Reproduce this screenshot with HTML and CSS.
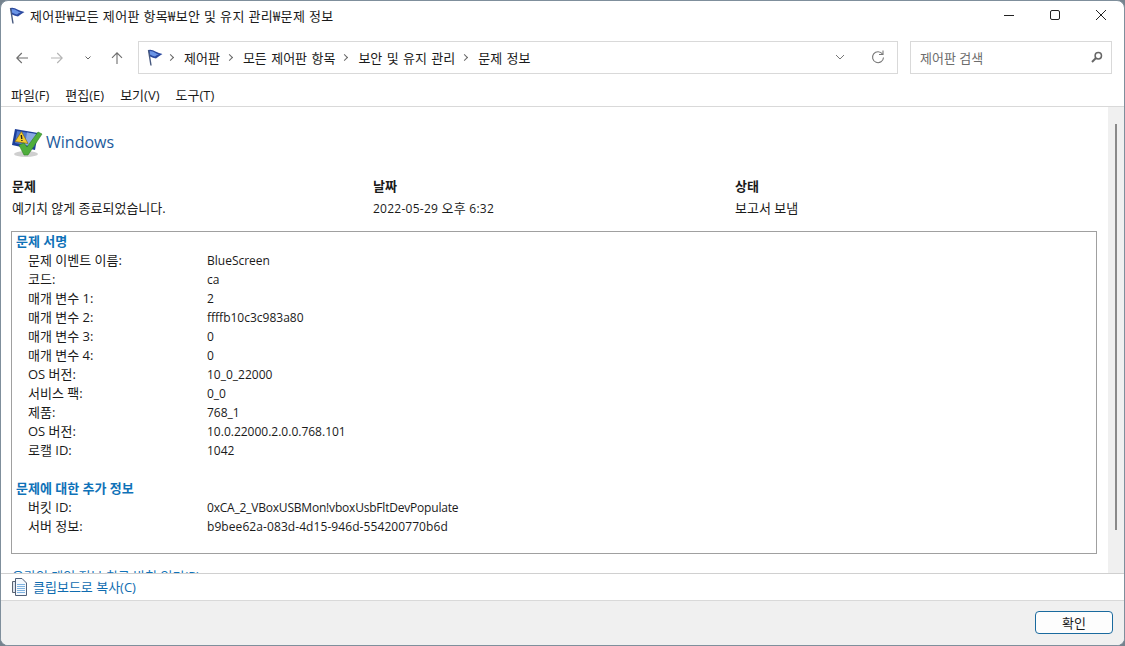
FILE: index.html
```html
<!DOCTYPE html>
<html>
<head>
  <meta charset="utf-8">
  <title>문제 정보</title>
  <link rel="stylesheet" href="styles.css">
</head>
<body>
  <div class="window">
    <!-- 제목 표시줄 -->
    <div class="titlebar">
      <svg class="flag" width="16" height="17" viewBox="0 0 16 17"><path d="M1 1 Q5 0 8.500 2.500 Q12 4 15.500 5 Q12 7 9 9.500 Q6 9 3 7.500 Z" fill="#2c4aa0"/><path d="M2.500 2 Q6 2 8.500 4 Q10 5 12 5.500 Q9 6 8 7.500 Q5.500 7 3 5.500 Z" fill="#6a94e6"/><path d="M1.500 1 L4 16.500" stroke="#46587e" stroke-width="1.400"/></svg>
      <span class="title-text">제어판₩모든 제어판 항목₩보안 및 유지 관리₩문제 정보</span>
      <div class="win-buttons">
        <svg width="12" height="12" viewBox="0 0 12 12"><path d="M1 6.500 H11" stroke="#222" stroke-width="1"/></svg>
        <svg width="12" height="12" viewBox="0 0 12 12"><rect x="1.500" y="1.500" width="9" height="9" rx="1.500" fill="none" stroke="#222"/></svg>
        <svg width="12" height="12" viewBox="0 0 12 12"><path d="M1 1 L11 11 M11 1 L1 11" stroke="#222" stroke-width="1"/></svg>
      </div>
    </div>

    <!-- 주소 표시줄 -->
    <div class="navbar">
      <div class="nav-buttons">
        <svg class="nav-back" width="12" height="12" viewBox="0 0 12 12"><path d="M12 6 H0.800 M5.800 1 L0.800 6 L5.800 11" fill="none" stroke="#6d6d6d" stroke-width="1.100"/></svg>
        <svg class="nav-fwd" width="12" height="12" viewBox="0 0 12 12"><path d="M0 6 H11.200 M6.200 1 L11.200 6 L6.200 11" fill="none" stroke="#b4b4b4" stroke-width="1.100"/></svg>
        <svg class="nav-down" width="6" height="4" viewBox="0 0 6 4"><path d="M0.500 0.500 L3 3 L5.500 0.500" fill="none" stroke="#666" stroke-width="1"/></svg>
        <svg class="nav-up" width="12" height="12" viewBox="0 0 12 12"><path d="M6 12 V0.800 M1 5.800 L6 0.800 L11 5.800" fill="none" stroke="#6d6d6d" stroke-width="1.100"/></svg>
      </div>
      <div class="address">
        <svg class="flag" width="16" height="17" viewBox="0 0 16 17"><path d="M1 1 Q5 0 8.500 2.500 Q12 4 15.500 5 Q12 7 9 9.500 Q6 9 3 7.500 Z" fill="#2c4aa0"/><path d="M2.500 2 Q6 2 8.500 4 Q10 5 12 5.500 Q9 6 8 7.500 Q5.500 7 3 5.500 Z" fill="#6a94e6"/><path d="M1.500 1 L4 16.500" stroke="#46587e" stroke-width="1.400"/></svg>
        <span class="crumb-sep"></span>
        <span>제어판</span><span class="crumb-sep"></span>
        <span>모든 제어판 항목</span><span class="crumb-sep"></span>
        <span>보안 및 유지 관리</span><span class="crumb-sep"></span>
        <span>문제 정보</span>
        <svg class="addr-down" width="10" height="6" viewBox="0 0 10 6"><path d="M1 1 L5 5 L9 1" fill="none" stroke="#777" stroke-width="1"/></svg>
        <svg class="addr-refresh" width="14" height="14" viewBox="0 0 14 14"><path d="M11.500 4 A5.500 5.500 0 1 0 12.500 7.500" fill="none" stroke="#777" stroke-width="1.100"/><path d="M12 0.500 V4.500 H8" fill="none" stroke="#777" stroke-width="1.100"/></svg>
      </div>
      <div class="search">
        <span>제어판 검색</span>
        <svg width="12" height="12" viewBox="0 0 12 12"><circle cx="7.300" cy="4.700" r="3.200" fill="none" stroke="#666" stroke-width="1.500"/><path d="M5 7 L1 11" stroke="#666" stroke-width="2"/></svg>
      </div>
    </div>

    <!-- 메뉴 -->
    <div class="menubar">
      <span>파일(F)</span>
      <span>편집(E)</span>
      <span>보기(V)</span>
      <span>도구(T)</span>
    </div>

    <div class="main">
      <div class="content">
        <div class="brand">
          <svg width="32" height="32" viewBox="0 0 32 32">
            <path d="M4 3 L27 7 L24 24 L1 19 Z" fill="#1d3f9a"/>
            <path d="M6 5 L25 8 L23 21 L4 17 Z" fill="#4f78cc"/>
            <path d="M16 6.500 L25 8 L23 21 L14 19 Z" fill="#8aa8e2"/>
            <path d="M10.500 5.500 L17 17.500 L4 15.500 Z" fill="#f3cb2d" stroke="#7a5a10" stroke-width="0.600"/>
            <path d="M10.300 9 L10.800 13 M10.900 14 V15" stroke="#222" stroke-width="1.400"/>
            <ellipse cx="15" cy="28" rx="12" ry="3" fill="#cfcfcf"/>
            <path d="M8 19 L13 17 L16 21 L27 6 L31 8 L17 29 L13 29 Z" fill="#4fae3c" stroke="#2d7f25" stroke-width="0.600"/>
          </svg>
          <span>Windows</span>
        </div>

        <div class="summary">
          <div class="summary-col">
            <b>문제</b>
            <span>예기치 않게 종료되었습니다.</span>
          </div>
          <div class="summary-col">
            <b>날짜</b>
            <span class="date">2022-05-29 <span class="ko">오후</span> 6:32</span>
          </div>
          <div class="summary-col">
            <b>상태</b>
            <span>보고서 보냄</span>
          </div>
        </div>

        <div class="detail-box">
          <div class="section-head">문제 서명</div>
          <div class="detail-row"><span>문제 이벤트 이름:</span><span>BlueScreen</span></div>
          <div class="detail-row"><span>코드:</span><span>ca</span></div>
          <div class="detail-row"><span>매개 변수 1:</span><span>2</span></div>
          <div class="detail-row"><span>매개 변수 2:</span><span>ffffb10c3c983a80</span></div>
          <div class="detail-row"><span>매개 변수 3:</span><span>0</span></div>
          <div class="detail-row"><span>매개 변수 4:</span><span>0</span></div>
          <div class="detail-row"><span>OS 버전:</span><span>10_0_22000</span></div>
          <div class="detail-row"><span>서비스 팩:</span><span>0_0</span></div>
          <div class="detail-row"><span>제품:</span><span>768_1</span></div>
          <div class="detail-row"><span>OS 버전:</span><span>10.0.22000.2.0.0.768.101</span></div>
          <div class="detail-row"><span>로캘 ID:</span><span>1042</span></div>
          <div class="section-head second">문제에 대한 추가 정보</div>
          <div class="detail-row"><span>버킷 ID:</span><span class="bucket">0xCA_2_VBoxUSBMon!vboxUsbFltDevPopulate</span></div>
          <div class="detail-row"><span>서버 정보:</span><span class="guid">b9bee62a-083d-4d15-946d-554200770b6d</span></div>
        </div>

        <div class="privacy-link">온라인 개인 정보 취급 방침 읽기(P)</div>
      </div>
      <div class="scrollbar"><div class="scroll-thumb"></div></div>
    </div>

    <div class="copybar">
      <svg width="15" height="18" viewBox="0 0 15 18">
        <path d="M0.500 3.500 H6 V14.500 H0.500 Z" fill="#dfe5ee" stroke="#5a6472"/>
        <path d="M3.500 0.500 H10 L14.500 5 V17.500 H3.500 Z" fill="#f4f8fd" stroke="#4f5f78"/>
        <path d="M5 6.500 H13 M5 8.500 H13 M5 10.500 H13 M5 12.500 H13 M5 14.500 H13" stroke="#7fb2e0"/>
      </svg>
      <span>클립보드로 복사(C)</span>
    </div>

    <div class="footer">
      <button class="ok-button">확인</button>
    </div>
  </div>
</body>
</html>
```

FILE: styles.css
```css
* {
  box-sizing: border-box;
}

html, body {
  height: 100%;
}

body {
  margin: 0;
  background-color: #75838e;
  font-family: "Open Sans", "Noto Sans CJK KR", sans-serif;
  font-size: 13px;
  color: #1a1a1a;
  overflow: hidden;
}

.window {
  display: flex;
  flex-direction: column;
  height: 646px;
  background-color: #fff;
  border: 1px solid #7f8f9c;
  border-radius: 8px;
  overflow: hidden;
}

/* 제목 표시줄 */
.titlebar {
  display: flex;
  align-items: center;
  height: 31px;
  padding-left: 8px;
  padding-bottom: 3px;
  flex: none;
}

.title-text {
  margin-left: 5px;
  letter-spacing: 0.35px;
}

.win-buttons {
  display: flex;
  align-items: center;
  gap: 34px;
  margin-left: auto;
  margin-right: 17px;
}

/* 주소 표시줄 */
.navbar {
  display: flex;
  height: 33px;
  margin-top: 9px;
  flex: none;
}

.nav-buttons {
  display: flex;
  align-items: center;
  width: 137px;
  padding-left: 15px;
}

.nav-fwd {
  margin-left: 23px;
}

.nav-down {
  margin-left: 22px;
}

.nav-up {
  margin-left: 20px;
}

.address {
  display: flex;
  align-items: center;
  width: 760px;
  padding-left: 8px;
  padding-right: 12px;
  padding-bottom: 1px;
  border: 1px solid #d9d9d9;
  word-spacing: 1px;
}

.crumb-sep {
  width: 5px;
  height: 5px;
  margin: 0 11px 0 7px;
  border-top: 1px solid #666;
  border-right: 1px solid #666;
  transform: rotate(45deg);
}

.address .flag {
  margin-right: -2px;
}

.addr-down {
  margin-left: auto;
}

.addr-refresh {
  margin-left: 26px;
}

.search {
  display: flex;
  align-items: center;
  justify-content: space-between;
  width: 202px;
  margin-left: 12px;
  padding: 0 8px 1px 9px;
  border: 1px solid #d9d9d9;
  color: #6d6d6d;
}

/* 메뉴 */
.menubar {
  display: flex;
  align-items: center;
  gap: 16px;
  height: 24px;
  margin-top: 9px;
  padding-left: 10px;
  border-bottom: 1px solid #d9d9d9;
  flex: none;
}

.main {
  display: flex;
  height: 466px;
  flex: none;
}

.content {
  flex: 1;
  padding: 17px 11px 0 10px;
  overflow: hidden;
}

.brand {
  display: flex;
  align-items: center;
  gap: 3px;
  height: 36px;
  font-size: 16px;
  color: #1c5a9c;
}

.summary {
  display: flex;
  margin-top: 17px;
}

.summary-col {
  display: flex;
  flex-direction: column;
  gap: 4px;
  width: 362px;
  line-height: 18px;
}

.summary-col:first-child {
  padding-left: 1px;
}

.summary-col b {
  font-weight: 700;
}

.date {
  font-size: 12px;
  letter-spacing: 0.25px;
}

.ko {
  font-size: 13px;
}

.detail-box {
  height: 323px;
  margin-top: 13px;
  padding: 0 4px;
  border: 1px solid #a0a0a0;
}

.section-head {
  height: 19px;
  line-height: 19px;
  font-weight: 700;
  color: #0f72b8;
}

.section-head.second {
  margin-top: 19px;
}

.detail-row {
  display: grid;
  grid-template-columns: 179px 1fr;
  height: 19px;
  padding-left: 12px;
  line-height: 19px;
}

.detail-row span:last-child {
  font-size: 12px;
}

.bucket {
  letter-spacing: -0.2px;
}

.guid {
  letter-spacing: 0.08px;
}

.privacy-link {
  margin-top: 13px;
  padding-left: 1px;
  line-height: 18px;
  color: #0f72b8;
}

.scrollbar {
  position: relative;
  width: 16px;
  background-color: #f0f0f0;
  flex: none;
}

.scroll-thumb {
  position: absolute;
  top: 17px;
  left: 7px;
  width: 2px;
  height: 406px;
  background-color: #8a8a8a;
}

.copybar {
  display: flex;
  align-items: center;
  gap: 6px;
  height: 28px;
  padding-left: 11px;
  padding-bottom: 1px;
  border-top: 1px solid #d0d0d0;
  border-bottom: 1px solid #d9d9d9;
  color: #0f6cb0;
  flex: none;
}

.footer {
  display: flex;
  align-items: flex-start;
  justify-content: flex-end;
  flex: 1;
  padding: 10px 11px 0 0;
  background-color: #f0f0f0;
}

.ok-button {
  width: 78px;
  height: 23px;
  padding: 0;
  background-color: #fdfdfd;
  border: 1px solid #1a6a9e;
  border-radius: 4px;
  font-family: "Open Sans", "Noto Sans CJK KR", sans-serif;
  font-size: 13px;
  color: #1a1a1a;
}
```
